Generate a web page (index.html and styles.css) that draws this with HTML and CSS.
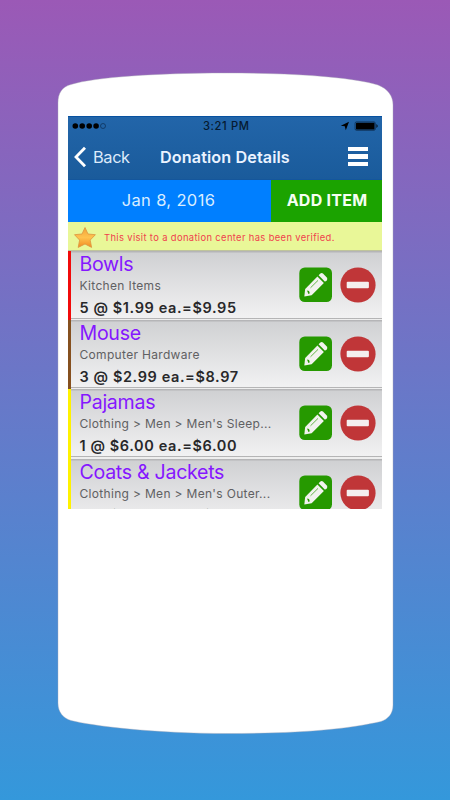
FILE: index.html
```html
<!DOCTYPE html>
<html lang="en">
<head>
<meta charset="utf-8">
<title>Donation Details</title>
<link rel="stylesheet" href="styles.css">
</head>
<body>
<svg class="defs" width="0" height="0" aria-hidden="true">
  <symbol id="edit" viewBox="0 0 34 36">
    <rect x=".3" y=".5" width="32.7" height="34.5" rx="5.5" fill="#269900"/>
    <path d="M5.3 29.6 6.2 22 18.4 9.4 24.9 15.9 12.6 28.2Z" fill="#f2f3ee"/>
    <path d="M19.6 8.2 21.4 6.5Q22.8 5.4 24.2 6.7L27.8 10.4Q29 11.8 27.8 13.2L26 14.8Z" fill="#f2f3ee"/>
    <path d="M11.5 20.8 19 13.4" stroke="#269900" stroke-width=".7"/>
    <path d="m8 23.4 2 .7.8 2.2-1.4.6Z" fill="#269900"/>
  </symbol>
  <symbol id="remove" viewBox="0 0 36 36">
    <circle cx="18" cy="18" r="17.6" fill="#c03638"/>
    <rect x="6.7" y="14.7" width="22.2" height="6.5" rx="1" fill="#f4efef"/>
  </symbol>
</svg>
<main class="phone">
  <svg class="shell" viewBox="0 0 335 661" aria-hidden="true">
    <path d="M0 30C0 20 4 14 13 11.5C37 4 100 0 167 0C235 0 294 4 320 12C330 16 335 23 335 32V632C335 641 330 646 323 648.5C290 656 245 660.5 170 660.5C95 660.5 35 653 13 647.5C5 645 0 639 0 630Z" fill="#fff" stroke="#aaa8b5" stroke-width=".4"/>
  </svg>
  <section class="screen">
    <header class="header">
      <div class="status">
        <svg class="signal" width="36" height="8" viewBox="0 0 36 8"><circle cx="3.3" cy="4" r="2.8"/><circle cx="10.2" cy="4" r="2.8"/><circle cx="17.2" cy="4" r="2.8"/><circle cx="24.1" cy="4" r="2.8"/><circle cx="31" cy="4" r="2.5" fill="none" stroke="#0c2d51" stroke-width=".7"/></svg>
        <span class="time">3:21 PM</span>
        <svg class="battery" width="40" height="10" viewBox="0 0 40 10"><path d="M9 .8 5.8 9.2 4.8 5.3.8 4.8Z"/><rect x="15.1" y=".9" width="20.2" height="8.4" rx="1.4" fill="none" stroke="#061b32" stroke-width=".6"/><rect x="16" y="1.8" width="18.5" height="6.6" rx=".6"/><path d="M36.5 3q2.2 2 0 4Z"/></svg>
      </div>
      <nav class="nav">
        <div class="back"><svg width="14" height="22" viewBox="0 0 14 22"><path d="M12 1.7 3 11l9 9.3" fill="none" stroke="#fff" stroke-width="2.8"/></svg><span>Back</span></div>
        <h1 class="title">Donation Details</h1>
        <div class="menu"><i></i><i></i><i></i></div>
      </nav>
    </header>
    <div class="actions">
      <div class="date"><span>Jan 8, 2016</span></div>
      <div class="add"><span>ADD ITEM</span></div>
    </div>
    <div class="notice">
      <svg width="24" height="23" viewBox="0 0 24 23"><defs><linearGradient id="gold" x2="0" y2="1"><stop offset="0" stop-color="#f2a338"/><stop offset=".5" stop-color="#ffc24e"/><stop offset="1" stop-color="#f28b22"/></linearGradient></defs><path d="M12 1.5 15 8l7.4.7-5.2 5.4 1.4 7.3L12 18l-6.8 3.4 1.4-7.3L1.5 8.7 9 8Z" fill="url(#gold)" stroke="#dc9440" stroke-width=".8" stroke-linejoin="round"/></svg>
      <span>This visit to a donation center has been verified.</span>
    </div>
    <ul class="list">
      <li class="item red">
        <div class="info"><h2>Bowls</h2><p>Kitchen Items</p><strong>5 @ $1.99 ea.=$9.95</strong></div>
        <svg class="edit"><use href="#edit"/></svg><svg class="remove"><use href="#remove"/></svg>
      </li>
      <li class="item brown">
        <div class="info"><h2>Mouse</h2><p>Computer Hardware</p><strong>3 @ $2.99 ea.=$8.97</strong></div>
        <svg class="edit"><use href="#edit"/></svg><svg class="remove"><use href="#remove"/></svg>
      </li>
      <li class="item yellow">
        <div class="info"><h2>Pajamas</h2><p>Clothing &gt; Men &gt; Men's Sleep...</p><strong>1 @ $6.00 ea.=$6.00</strong></div>
        <svg class="edit"><use href="#edit"/></svg><svg class="remove"><use href="#remove"/></svg>
      </li>
      <li class="item yellow">
        <div class="info"><h2>Coats &amp; Jackets</h2><p>Clothing &gt; Men &gt; Men's Outer...</p><strong>1 @ $30.00 ea.=$30.00</strong></div>
        <svg class="edit"><use href="#edit"/></svg><svg class="remove"><use href="#remove"/></svg>
      </li>
    </ul>
  </section>
</main>
</body>
</html>
```
FILE: styles.css
```css
* { box-sizing: border-box; }
body {
  margin: 0;
  height: 800px;
  overflow: hidden;
  background: linear-gradient(#9b59b6, #3498db);
  font-family: Inter, "Liberation Sans", sans-serif;
}
h1, h2, p, ul { margin: 0; padding: 0; }
span, h1, h2, p, strong { white-space: nowrap; }
.defs { position: absolute; }
.phone {
  position: relative;
  width: 335px;
  height: 661px;
  margin: 73px 0 0 58px;
  padding: 43px 10px 0;
}
body::before { content: ""; display: table; }
.shell { position: absolute; inset: 0; width: 335px; height: 661px; overflow: visible; }
.screen { position: relative; width: 314px; height: 392.5px; overflow: hidden; }
.header {
  height: 64px;
  background: linear-gradient(#2265a9, #1a5b9b);
  border-top: 1px solid #0751a0;
  border-bottom: 1px solid #14569c;
}
.status { height: 17px; display: flex; align-items: center; padding: 0 2px 0 4px; }
.time { width: 60px; margin-left: 95px; font-size: 11.2px; font-weight: 500; color: #061a30; letter-spacing: .6px; }
.battery { margin-left: auto; }
.nav { height: 45px; display: flex; align-items: center; color: #eaf3ff; }
.back { display: flex; align-items: center; width: 92px; padding-left: 5px; gap: 6px; font-size: 16.4px; letter-spacing: -.4px; color: #dceafa; }
.title { width: 180px; font-size: 16.2px; font-weight: 600; letter-spacing: .1px; }
.menu { display: grid; gap: 3px; margin: 0 0 0 8px; }
.menu i { width: 20px; height: 4.2px; background: #fff; }
.actions { display: flex; height: 42px; }
.date { width: 203px; padding: 0 2px 2px 0; background: #007fff; color: #d9edff; display: grid; place-items: center; font-size: 16.5px; letter-spacing: .35px; }
.add { flex: 1; padding: 0 0 2px 1px; background: #1ba300; color: #f5fff2; display: grid; place-items: center; font-size: 16px; font-weight: 700; letter-spacing: .25px; }
.notice {
  height: 29px;
  display: flex;
  align-items: center;
  padding: 2px 0 0 5px;
  gap: 7px;
  background: #e9f798;
  border-bottom: 1px solid #bfc49b;
  color: #f0414d;
  font-size: 9.4px;
  letter-spacing: .36px;
}
.notice svg { flex: none; }
.list { list-style: none; }
.item {
  height: 69.2px;
  display: flex;
  align-items: flex-start;
  padding-left: 8.5px;
  border-left: 3px solid;
  background: linear-gradient(#b5b5b7 0 1px, #d0d1d3 2px, #f1f1f2 66.5px, #b2b2b3 67.2px, #b9b9ba 68px, #eee 68.4px);
}
.red { border-color: #f10b0b; }
.brown { border-color: #85501f; }
.yellow { border-color: #fff200; }
.info { width: 219px; }
h2 { height: 26px; line-height: 26px; font-size: 19.6px; font-weight: 400; color: #8517ff; letter-spacing: -.3px; }
p { height: 18px; line-height: 17px; font-size: 12px; color: #606062; letter-spacing: .32px; }
strong { display: block; line-height: 25px; font-size: 14.5px; font-weight: 600; color: #28282a; letter-spacing: .6px; }
.edit { width: 34px; height: 36px; margin-top: 16px; flex: none; }
.remove { width: 36px; height: 36px; margin: 16px 0 0 7px; flex: none; }
```
